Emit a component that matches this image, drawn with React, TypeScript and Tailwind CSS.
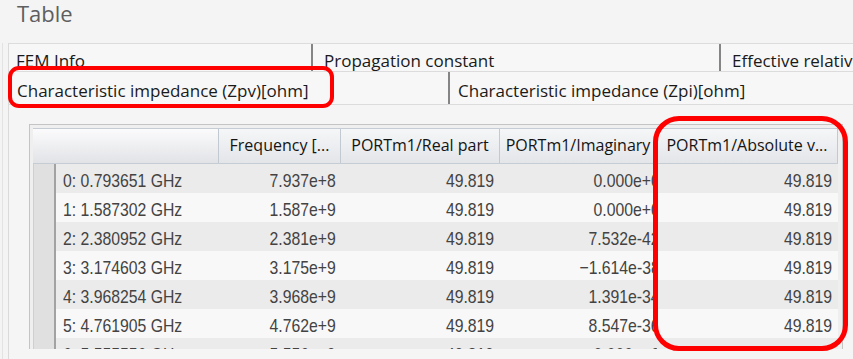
import React from "react";

const rows: string[][] = [
  ["0: 0.793651 GHz", "7.937e+8", "49.819", "0.000e+0", "49.819"],
  ["1: 1.587302 GHz", "1.587e+9", "49.819", "0.000e+0", "49.819"],
  ["2: 2.380952 GHz", "2.381e+9", "49.819", "7.532e-42", "49.819"],
  ["3: 3.174603 GHz", "3.175e+9", "49.819", "\u22121.614e-38", "49.819"],
  ["4: 3.968254 GHz", "3.968e+9", "49.819", "1.391e-34", "49.819"],
  ["5: 4.761905 GHz", "4.762e+9", "49.819", "8.547e-36", "49.819"],
  ["6: 5.555556 GHz", "5.556e+9", "49.819", "0.000e+0", "49.819"],
];

function Num({ children, left }: { children: React.ReactNode; left?: boolean }) {
  return (
    <span
      className={
        "inline-block whitespace-nowrap scale-x-[0.83] font-['Liberation_Sans',Arial,sans-serif] text-[19px] leading-none text-[#434343] " +
        (left ? "origin-left" : "origin-right")
      }
    >
      {children}
    </span>
  );
}

function HeadCell({ w, children }: { w: string; children?: React.ReactNode }) {
  return (
    <div
      className={
        w +
        " shrink-0 h-full flex items-center justify-center pb-[3px] overflow-hidden whitespace-nowrap bg-gradient-to-b from-[#f5f6f8] to-[#e3e5e9] border-r border-[#c3c9d1] text-[16px] leading-none text-[#141414]"
      }
    >
      {children}
    </div>
  );
}

export default function App() {
  return (
    <div className="relative w-[853px] h-[359px] overflow-hidden bg-[#f4f4f4] font-['Open_Sans',sans-serif]">
      <div className="h-[43px] pl-[17px] pt-[1px] text-[22px] leading-[24px] text-[#5e5e5e]">Table</div>
      <div className="ml-[2px] h-[316px] border-l border-[#e3e3e3]">
        <div className="ml-[5px] h-full flex flex-col border-l border-[#dadada]">
          {/* tab row 1 */}
          <div className="h-[29px] shrink-0 flex overflow-hidden border-y border-[#dcdcdc] bg-[#f7f7f7] text-[17px] leading-[17px] text-[#1a1a1a] whitespace-nowrap">
            <div className="w-[302px] shrink-0 pl-[7px] pt-[8px]">FEM Info</div>
            <div className="w-[2px] shrink-0 bg-[#858585]" />
            <div className="w-[406px] shrink-0 pl-[11px] pt-[8px]">Propagation constant</div>
            <div className="w-[2px] shrink-0 bg-[#858585]" />
            <div className="w-[200px] shrink-0 pl-[11px] pt-[8px]">Effective relative permittivity</div>
          </div>
          {/* tab row 2 */}
          <div className="h-[33px] shrink-0 flex overflow-hidden border-b border-[#dcdcdc] bg-[#f7f7f7] text-[17px] leading-[17px] text-[#1a1a1a] whitespace-nowrap">
            <div className="w-[439px] shrink-0 pl-[8px] pt-[10px]">Characteristic impedance (Zpv)[ohm]</div>
            <div className="w-[2px] shrink-0 bg-[#858585]" />
            <div className="w-[400px] shrink-0 pl-[8px] pt-[10px]">Characteristic impedance (Zpi)[ohm]</div>
          </div>
          {/* panel */}
          <div className="flex-1 pl-[20px] pt-[19px] bg-[#f5f5f5]">
            <div className="w-[814px] h-[225px] overflow-hidden border-t border-x border-[#c4c4c4] bg-[#efefef] pt-[3px] pl-[3px]">
              <div className="w-[805px]">
                <div className="h-[36px] flex border-y border-[#c6ccd3]">
                  <div className="w-[186px] shrink-0 h-full bg-gradient-to-b from-[#fbfbfc] to-[#e2e3e7] border-r border-[#c3c9d1]" />
                  <HeadCell w="w-[122px]">Frequency [...</HeadCell>
                  <HeadCell w="w-[159px]">PORTm1/Real part</HeadCell>
                  <HeadCell w="w-[157px]">PORTm1/Imaginary</HeadCell>
                  <HeadCell w="w-[181px]">PORTm1/Absolute v...</HeadCell>
                </div>
                {rows.map((r, i) => (
                  <div
                    key={i}
                    className={"h-[29px] flex " + (i % 2 === 0 ? "bg-[#ebebeb]" : "bg-[#f8f8f8]")}
                  >
                    <div className="w-[23px] shrink-0 h-full bg-[#e0e0e0] border-l border-[#cfcfcf] border-r-2 border-r-[#a2a2a2]" />
                    <div className="w-[163px] shrink-0 h-full flex items-center pl-[7px] pt-[3px] overflow-hidden">
                      <Num left>{r[0]}</Num>
                    </div>
                    <div className="w-[122px] shrink-0 h-full flex items-center justify-end pr-[5px] pt-[3px] overflow-hidden">
                      <Num>{r[1]}</Num>
                    </div>
                    <div className="w-[159px] shrink-0 h-full flex items-center justify-end pr-[6px] pt-[3px] overflow-hidden">
                      <Num>{r[2]}</Num>
                    </div>
                    <div className="w-[157px] shrink-0 h-full flex items-center justify-end pt-[3px] overflow-hidden">
                      <span className="-mr-[3px] flex">
                        <Num>{r[3]}</Num>
                      </span>
                    </div>
                    <div className="w-[181px] shrink-0 h-full flex items-center justify-end pr-[6px] pt-[3px] overflow-hidden">
                      <Num>{r[4]}</Num>
                    </div>
                  </div>
                ))}
              </div>
            </div>
          </div>
        </div>
      </div>
      {/* annotation overlays */}
      <div className="absolute left-[8px] top-[66px] w-[326px] h-[42px] rounded-[11px] border-4 border-[#ff0000]" />
      <div className="absolute left-[653px] top-[116px] w-[195px] h-[235px] rounded-[26px] border-[5px] border-[#ff0000]" />
    </div>
  );
}
